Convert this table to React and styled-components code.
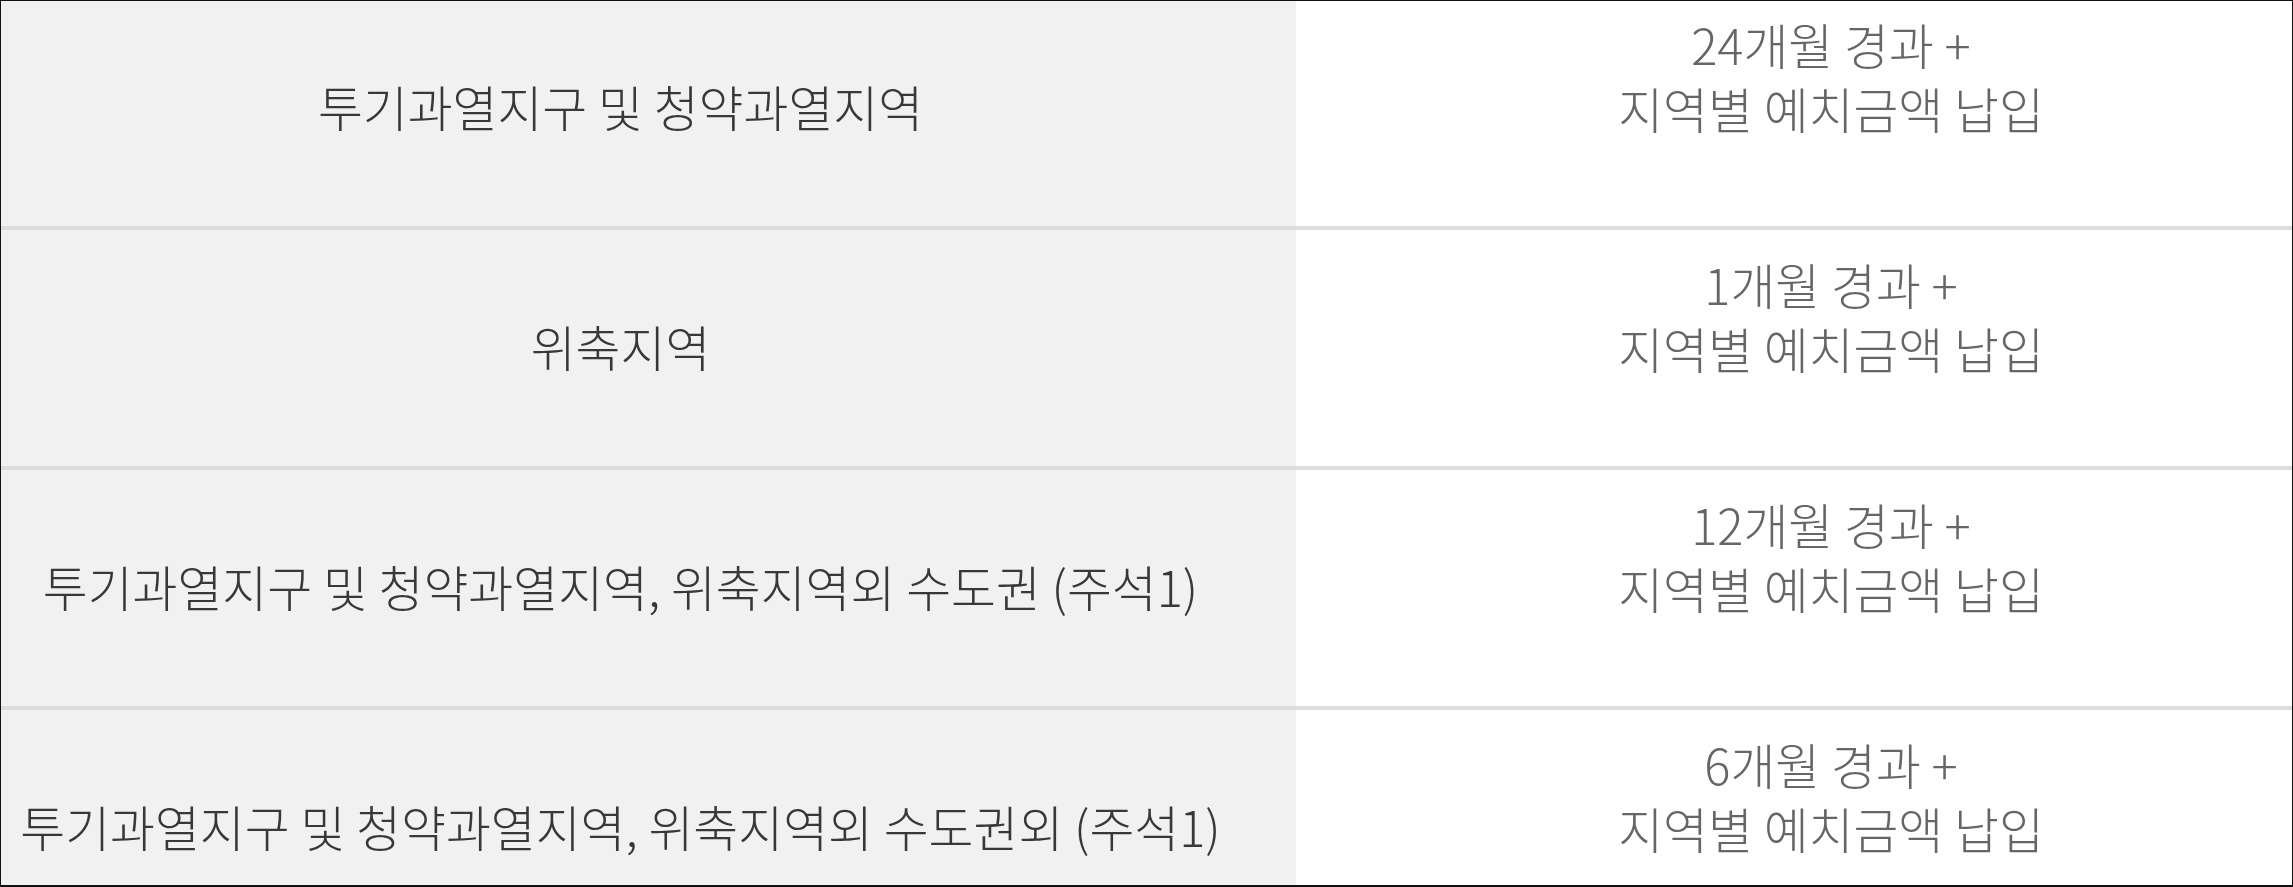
import React from 'react';
import styled, { createGlobalStyle } from 'styled-components';

const GlobalStyle = createGlobalStyle`
  html, body {
    margin: 0;
    padding: 0;
    background: #fff;
  }
  body {
    font-family: 'Noto Sans CJK KR', 'Noto Sans', sans-serif;
    overflow: hidden;
  }
`;

const Frame = styled.div`
  box-sizing: border-box;
  width: 2293px;
  height: 887px;
  border: 1px solid #111;
  border-bottom-width: 2px;
  overflow: hidden;
`;

const Table = styled.div`
  margin-top: -11px;
  display: flex;
  flex-direction: column;
`;

const Row = styled.div`
  display: grid;
  grid-template-columns: 1295px 1fr;
  height: 236px;
  border-bottom: 4px solid #dddddd;
`;

const Label = styled.div`
  display: flex;
  align-items: center;
  justify-content: center;
  padding: 0 56px 6px 0;
  background: #f1f1f1;
  color: #383838;
  font-size: 48.8px;
  font-weight: 300;
  white-space: nowrap;
`;

const Value = styled.div`
  display: flex;
  flex-direction: column;
  align-items: center;
  padding: 22px 0 0 74px;
  background: #fff;
  color: #666;
  font-size: 48.8px;
  font-weight: 300;
  line-height: 64px;
  white-space: nowrap;
`;

const rows = [
  { label: '투기과열지구 및 청약과열지역', months: '24개월' },
  { label: '위축지역', months: '1개월' },
  { label: '투기과열지구 및 청약과열지역, 위축지역외 수도권 (주석1)', months: '12개월' },
  { label: '투기과열지구 및 청약과열지역, 위축지역외 수도권외 (주석1)', months: '6개월' },
];

const App = () => (
  <>
    <GlobalStyle />
    <Frame>
      <Table>
        {rows.map((row, i) => (
          <Row key={i}>
            <Label>{row.label}</Label>
            <Value>
              <span>{row.months} 경과 +</span>
              <span>지역별 예치금액 납입</span>
            </Value>
          </Row>
        ))}
      </Table>
    </Frame>
  </>
);

export default App;
